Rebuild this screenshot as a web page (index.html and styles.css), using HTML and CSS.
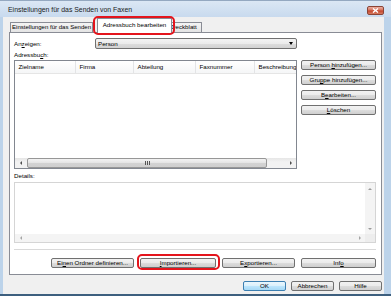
FILE: index.html
```html
<!DOCTYPE html>
<html lang="de">
  <head>
    <meta charset="utf-8">
    <title>Einstellungen für das Senden von Faxen</title>
    <link rel="stylesheet" href="styles.css">
  </head>
  <body>
    <div class="window">
      <div class="titlebar">
        <span class="title">Einstellungen für das Senden von Faxen</span>
        <span class="close">
          <svg width="7" height="5" viewBox="0 0 7 5"><path d="M1 0.5 L6 4.5 M6 0.5 L1 4.5" stroke="#fff" stroke-width="1.4"/></svg>
        </span>
      </div>
      <div class="client">
        <div class="tabs">
          <div class="tab tab-first">Einstellungen für das Senden</div>
          <div class="tab tab-active marked">Adressbuch bearbeiten</div>
          <div class="tab tab-last">Deckblatt</div>
        </div>
        <div class="panel">
          <div class="show-row">
            <span class="show-label">An<u>z</u>eigen:</span>
            <div class="combo">
              <span>Person</span>
              <span class="combo-arrow"></span>
            </div>
          </div>
          <div class="book-label">Adressbu<u>c</u>h:</div>
          <div class="book-row">
            <div class="list">
              <div class="list-head">
                <div class="col col-name">Zielname</div>
                <div class="col col-firm">Firma</div>
                <div class="col col-dept">Abteilung</div>
                <div class="col col-fax">Faxnummer</div>
                <div class="col col-desc">Beschreibung</div>
              </div>
              <div class="list-body"></div>
              <div class="hscroll">
                <span class="sb-btn"><span class="arr arr-left"></span></span>
                <span class="thumb"><span class="grip"></span></span>
                <span class="sb-track"></span>
                <span class="sb-btn"><span class="arr arr-right"></span></span>
              </div>
            </div>
            <div class="side-buttons">
              <button class="btn">Person <u>h</u>inzufügen...</button>
              <button class="btn">Gru<u>p</u>pe hinzufügen...</button>
              <button class="btn">B<u>e</u>arbeiten...</button>
              <button class="btn"><u>L</u>öschen</button>
            </div>
          </div>
          <div class="details-label">Details:</div>
          <div class="details">
            <div class="details-main">
              <div class="details-text"></div>
              <div class="vscroll">
                <span class="arr arr-up"></span>
                <span class="arr arr-down"></span>
              </div>
            </div>
            <div class="details-bottom">
              <div class="hscroll-flat">
                <span class="arr arr-left dim"></span>
                <span class="arr arr-right dim"></span>
              </div>
              <div class="corner"></div>
            </div>
          </div>
          <div class="separator"></div>
          <div class="panel-buttons">
            <button class="btn btn-folder">Ei<u>n</u>en Ordner definieren...</button>
            <button class="btn btn-import marked"><u>I</u>mportieren...</button>
            <button class="btn btn-export">E<u>x</u>portieren...</button>
            <button class="btn btn-info">Inf<u>o</u></button>
          </div>
        </div>
        <div class="dialog-buttons">
          <button class="btn btn-dialog btn-default">OK</button>
          <button class="btn btn-dialog">Abbrechen</button>
          <button class="btn btn-dialog">Hilfe</button>
        </div>
      </div>
    </div>
  </body>
</html>
```

FILE: styles.css
```css
* { box-sizing: border-box; }
body {
  margin: 0;
  font-family: "Liberation Sans", Arial, sans-serif;
  font-size: 6.2px;
  color: #000;
}
u { text-decoration-thickness: 0.5px; text-underline-offset: 1px; }

.window {
  width: 391px;
  height: 296px;
  display: flex;
  flex-direction: column;
  background: #bcd3ea;
  border-bottom: 2px solid #3d5f7e;
  overflow: hidden;
}
.titlebar {
  height: 17px;
  flex: none;
  display: flex;
  justify-content: space-between;
  align-items: flex-start;
  padding: 0 7px 0 8px;
  border-top: 1px solid #94a8c0;
  background: linear-gradient(#dbe7f4, #c8daee);
}
.title {
  font-size: 6.9px;
  line-height: 18px;
  color: #1b1b1b;
}
.close {
  width: 17px;
  height: 9px;
  margin-top: 5px;
  display: flex;
  align-items: center;
  justify-content: center;
  border: 1px solid #8a4436;
  border-radius: 2px;
  background: linear-gradient(#eab0a2, #d6735d 45%, #c4452c 55%, #d77a5f);
}

.client {
  flex: 1;
  margin: 0 7px 0 3px;
  background: #f0f0f0;
  display: flex;
  flex-direction: column;
}
.tabs {
  height: 15px;
  flex: none;
  display: flex;
  align-items: flex-end;
  padding-left: 7px;
}
.tab {
  height: 10px;
  border: 1px solid #898c95;
  border-bottom: none;
  border-radius: 1px 1px 0 0;
  background: linear-gradient(#f4f4f4, #e4e4e4);
  line-height: 8px;
  white-space: nowrap;
  overflow: hidden;
}
.tab-first {
  width: 83px;
  padding-left: 1px;
  font-size: 6.05px;
}
.tab-active {
  width: 75px;
  height: 15px;
  margin: 0 0 -1px 4px;
  padding-top: 2px;
  background: #fff;
  text-align: center;
  overflow: visible;
  position: relative;
  z-index: 1;
}
.tab-last {
  width: 34px;
  margin-left: -4px;
  padding-left: 2px;
}
.marked { position: relative; }
.marked::after {
  content: "";
  position: absolute;
  border: 2px solid #e4141c;
  border-radius: 5px;
}
.tab-active::after { top: -3px; left: -5px; right: -4px; bottom: -2px; }
.btn-import::after { top: -5px; left: -4px; right: -5px; bottom: -3px; }

.panel {
  flex: 1;
  margin: 0 2px 0 6px;
  border: 1px solid #898c95;
  background: #fff;
  padding: 5px 5px 3px 4px;
  display: flex;
  flex-direction: column;
}
.show-row {
  height: 11px;
  display: flex;
  align-items: center;
}
.show-label { width: 81px; }
.combo {
  width: 202px;
  height: 11px;
  display: flex;
  align-items: center;
  justify-content: space-between;
  padding: 0 3px 0 2px;
  border: 1px solid #707070;
  border-radius: 2px;
  background: linear-gradient(#f3f3f3, #ebebeb 50%, #dddddd 50%, #d2d2d2);
}
.combo-arrow {
  border-left: 2.5px solid transparent;
  border-right: 2.5px solid transparent;
  border-top: 3px solid #000;
}
.book-label {
  height: 11px;
  line-height: 11px;
}
.book-row {
  height: 109px;
  display: flex;
  gap: 4px;
}
.list {
  width: 283px;
  border: 1px solid #828790;
  display: flex;
  flex-direction: column;
}
.list-head {
  height: 13px;
  display: flex;
  background: linear-gradient(#fff, #f5f6f7);
  border-bottom: 1px solid #e5e5e5;
}
.col {
  line-height: 12px;
  padding-left: 3.5px;
  border-right: 1px solid #e3e4e6;
  white-space: nowrap;
  overflow: hidden;
}
.col-name { width: 61px; }
.col-firm { width: 58px; }
.col-dept { width: 62px; }
.col-fax { width: 59px; }
.col-desc { flex: 1; border-right: none; }
.list-body { flex: 1; }
.hscroll {
  height: 10px;
  display: flex;
  background: linear-gradient(#e6e6e6, #f2f2f2 40%, #f2f2f2);
}
.sb-btn {
  width: 11px;
  display: flex;
  align-items: center;
  justify-content: center;
}
.thumb {
  width: 240px;
  margin: 0 0 0 1px;
  border: 1px solid #979797;
  border-radius: 2px;
  background: linear-gradient(#f3f3f3, #e4e4e4 50%, #d3d3d3 50%, #cfcfcf);
  display: flex;
  align-items: center;
  justify-content: center;
}
.grip {
  width: 5px;
  height: 4px;
  background: repeating-linear-gradient(90deg, #555 0 1px, transparent 1px 2px);
}
.sb-track { flex: 1; }
.arr { width: 0; height: 0; border: 2px solid transparent; }
.arr-left { border-left: none; border-right: 2.5px solid #4d4d4d; }
.arr-right { border-right: none; border-left: 2.5px solid #4d4d4d; }
.arr-up { border-top: none; border-bottom: 2.5px solid #9a9a9a; }
.arr-down { border-bottom: none; border-top: 2.5px solid #9a9a9a; }
.arr-left.dim { border-right-color: #a5a5a5; }
.arr-right.dim { border-left-color: #a5a5a5; }

.side-buttons {
  width: 75px;
  display: flex;
  flex-direction: column;
  gap: 5px;
}
.btn {
  height: 10px;
  padding: 0;
  border: 1px solid #707070;
  border-radius: 2px;
  background: linear-gradient(#f2f2f2, #ebebeb 50%, #dddddd 50%, #cfcfcf);
  font: inherit;
  line-height: 8px;
  color: #000;
  white-space: nowrap;
}
.details-label {
  height: 13px;
  line-height: 13px;
}
.details {
  height: 61px;
  border: 1px solid #d5d5d5;
  display: flex;
  flex-direction: column;
}
.details-main {
  flex: 1;
  display: flex;
}
.details-text { flex: 1; }
.vscroll {
  width: 10px;
  display: flex;
  flex-direction: column;
  align-items: center;
  justify-content: space-between;
  padding: 5px 0 4px;
  background: #f4f4f4;
}
.details-bottom {
  height: 8px;
  display: flex;
}
.hscroll-flat {
  flex: 1;
  display: flex;
  align-items: center;
  justify-content: space-between;
  padding: 0 4px 0 5px;
  background: #f4f4f4;
}
.corner { width: 10px; background: #ededed; }
.separator {
  margin-top: 6px;
  border-top: 1px solid #d9d9d9;
}
.panel-buttons {
  margin-top: 8px;
  display: flex;
  justify-content: flex-end;
  gap: 6px;
}
.btn-folder { width: 83px; }
.btn-import { width: 76px; }
.btn-export { width: 73px; }
.btn-info { width: 75px; }

.dialog-buttons {
  height: 19px;
  flex: none;
  display: flex;
  justify-content: flex-end;
  gap: 5px;
  padding: 6px 2px 0 0;
}
.btn-dialog { width: 43px; }
.btn-default {
  border-color: #3c7fb1;
  background: linear-gradient(#eaf6fd, #d9f0fc 50%, #bee6fd 50%, #a7d9f5);
}
```
